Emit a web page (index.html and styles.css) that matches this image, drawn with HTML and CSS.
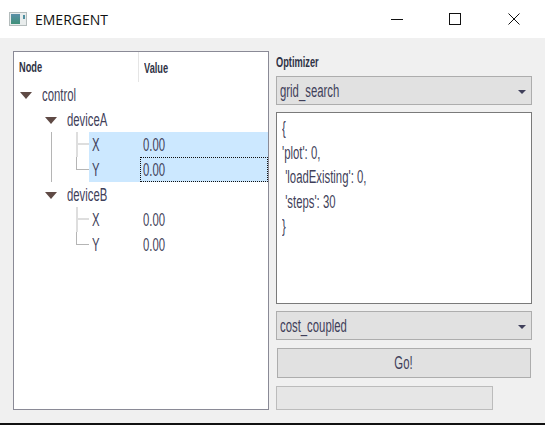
FILE: index.html
```html
<!DOCTYPE html>
<html lang="en">
<head>
    <meta charset="UTF-8" />
    <title>EMERGENT</title>
    <link rel="stylesheet" href="styles.css">
</head>
<body>
    <div class="window">
        <div class="titlebar">
            <svg class="app-icon" width="18" height="14" viewBox="0 0 18 14">
                <defs>
                    <linearGradient id="iconFill" x1="0" y1="0" x2="0" y2="1">
                        <stop offset="0" stop-color="#5a8fa8" />
                        <stop offset="1" stop-color="#3f9078" />
                    </linearGradient>
                </defs>
                <rect x="0.5" y="0.5" width="17" height="13" fill="#e8ecec" stroke="#b4bcbc" />
                <rect x="2" y="2" width="9" height="10" fill="url(#iconFill)" />
                <rect x="14" y="3" width="2" height="4" fill="#4f8fa0" />
            </svg>
            <span class="title">EMERGENT</span>
            <div class="controls">
                <svg width="58" height="12" viewBox="0 0 58 12" class="ctl"><path d="M0 6.5H12" stroke="#111" fill="none" /></svg>
                <svg width="59" height="12" viewBox="0 0 59 12" class="ctl"><rect x="0.5" y="0.5" width="11" height="11" stroke="#111" fill="none" /></svg>
                <svg width="12" height="12" viewBox="0 0 12 12" class="ctl"><path d="M0.5 0.5L11.5 11.5M11.5 0.5L0.5 11.5" stroke="#111" fill="none" /></svg>
            </div>
        </div>

        <div class="main">
            <div class="tree">
                <div class="tree-header">
                    <div class="head-node"><span class="txt bold">Node</span></div>
                    <div class="head-value"><span class="txt bold">Value</span></div>
                </div>

                <div class="row parent">
                    <i class="arrow"></i><span class="txt">control</span>
                </div>
                <div class="row parent depth1">
                    <i class="arrow"></i><span class="txt">deviceA</span>
                </div>
                <div class="row">
                    <div class="gutter"><i class="guide"></i><i class="tee"></i></div>
                    <div class="cells selected">
                        <div class="name"><span class="txt">X</span></div>
                        <div class="value"><span class="txt">0.00</span></div>
                    </div>
                </div>
                <div class="row">
                    <div class="gutter"><i class="guide"></i><i class="elbow"></i></div>
                    <div class="cells selected">
                        <div class="name"><span class="txt">Y</span></div>
                        <div class="value focused"><span class="txt">0.00</span></div>
                    </div>
                </div>
                <div class="row parent depth1">
                    <i class="arrow"></i><span class="txt">deviceB</span>
                </div>
                <div class="row">
                    <div class="gutter"><i class="guide off"></i><i class="tee"></i></div>
                    <div class="cells">
                        <div class="name"><span class="txt">X</span></div>
                        <div class="value"><span class="txt">0.00</span></div>
                    </div>
                </div>
                <div class="row">
                    <div class="gutter"><i class="guide off"></i><i class="elbow"></i></div>
                    <div class="cells">
                        <div class="name"><span class="txt">Y</span></div>
                        <div class="value"><span class="txt">0.00</span></div>
                    </div>
                </div>
            </div>

            <div class="side">
                <div class="label"><span class="txt bold">Optimizer</span></div>
                <div class="combo"><span class="txt">grid_search</span><i class="combo-arrow"></i></div>
                <div class="editor">
                    <div class="line"><span class="txt">{</span></div>
                    <div class="line"><span class="txt">'plot': 0,</span></div>
                    <div class="line"><span class="txt"> 'loadExisting': 0,</span></div>
                    <div class="line"><span class="txt"> 'steps': 30</span></div>
                    <div class="line"><span class="txt">}</span></div>
                </div>
                <div class="combo second"><span class="txt">cost_coupled</span><i class="combo-arrow"></i></div>
                <div class="go"><span class="txt">Go!</span></div>
                <div class="progress"></div>
            </div>
        </div>
    </div>
</body>
</html>
```

FILE: styles.css
```css
body {
    margin: 0;
    background-color: #f0f0f0;
}

.window {
    width: 545px;
    height: 425px;
    display: flex;
    flex-direction: column;
    overflow: hidden;
    border-bottom: 2px solid #111;
    box-sizing: border-box;
    font-family: "Liberation Sans", Arial, sans-serif;
    font-size: 18px;
    color: #3f3f5a;
}

/* condensed look, no narrow font is installed */
.txt {
    display: inline-block;
    white-space: pre;
    transform: scaleX(0.63);
    transform-origin: left center;
}

.bold {
    font-size: 14px;
    font-weight: bold;
    transform: scaleX(0.66);
    color: #2f3345;
}

.titlebar {
    height: 38px;
    flex: none;
    display: flex;
    align-items: center;
    background-color: #ffffff;
    padding-left: 9px;
    box-sizing: border-box;
}

.app-icon {
    margin-right: 8px;
}

.title {
    font-family: "Open Sans", sans-serif;
    font-size: 14px;
    color: #111;
}

.controls {
    margin-left: auto;
    margin-right: 25px;
    display: flex;
}

.ctl {
    display: block;
}

.main {
    flex: 1;
    display: flex;
    gap: 7px;
    padding: 13px 13px 0 13px;
}

.tree {
    width: 256px;
    height: 359px;
    box-sizing: border-box;
    background-color: #ffffff;
    border: 1px solid #8a8a96;
}

.tree-header {
    height: 30px;
    display: flex;
    align-items: center;
}

.head-node {
    width: 125px;
    height: 100%;
    display: flex;
    align-items: center;
    padding-left: 5px;
    box-sizing: border-box;
    border-right: 1px solid #e5e5e5;
}

.head-value {
    padding-left: 5px;
}

.row {
    height: 25px;
    display: flex;
    align-items: center;
}

.parent {
    padding-left: 6px;
    padding-top: 2px;
    box-sizing: border-box;
}

.depth1 {
    padding-left: 31px;
}

.arrow {
    width: 0;
    height: 0;
    margin-right: 10px;
    border-left: 6px solid transparent;
    border-right: 6px solid transparent;
    border-top: 7px solid #5f4a45;
}

.gutter {
    width: 75px;
    height: 100%;
    flex: none;
    display: flex;
}

.guide {
    width: 1px;
    margin-left: 37px;
    background-color: #b5b5b5;
}

.guide.off {
    background-color: transparent;
}

.tee {
    width: 13px;
    margin-left: 24px;
    box-sizing: border-box;
    border-left: 2px solid #dedede;
    background: linear-gradient(#dedede, #dedede) no-repeat 0 11px / 100% 2px;
}

.elbow {
    width: 13px;
    height: 13px;
    margin-left: 24px;
    box-sizing: border-box;
    border-left: 1px solid #b5b5b5;
    border-bottom: 1px solid #b5b5b5;
}

.cells {
    flex: 1;
    height: 100%;
    display: flex;
}

.selected {
    background-color: #cce8ff;
}

.name {
    width: 51px;
    flex: none;
    display: flex;
    align-items: center;
    padding: 2px 0 0 3px;
    box-sizing: border-box;
}

.value {
    flex: 1;
    display: flex;
    align-items: center;
    padding: 2px 0 0 3px;
    box-sizing: border-box;
}

.focused {
    border: 1px dotted #111;
    padding: 1px 0 0 2px;
}

.side {
    width: 256px;
    display: flex;
    flex-direction: column;
}

.label {
    height: 25px;
    line-height: 20px;
}

.combo {
    height: 29px;
    flex: none;
    display: flex;
    align-items: center;
    justify-content: space-between;
    padding: 2px 5px 0 3px;
    box-sizing: border-box;
    background-color: #e1e1e1;
    border: 1px solid #adadad;
}

.second {
    margin-top: 7px;
}

.combo-arrow {
    width: 0;
    height: 0;
    border-left: 4px solid transparent;
    border-right: 4px solid transparent;
    border-top: 4px solid #3f3f5a;
}

.editor {
    height: 192px;
    flex: none;
    margin-top: 7px;
    padding: 3px 5px;
    box-sizing: border-box;
    background-color: #ffffff;
    border: 1px solid #7a7a7a;
}

.line {
    height: 24.5px;
    line-height: 24.5px;
}

.go {
    height: 30px;
    flex: none;
    margin: 8px 1px 0 1px;
    display: flex;
    align-items: center;
    justify-content: center;
    box-sizing: border-box;
    background-color: #e1e1e1;
    border: 1px solid #adadad;
}

.go .txt {
    transform-origin: center;
}

.progress {
    width: 217px;
    height: 24px;
    margin-top: 8px;
    box-sizing: border-box;
    background-color: #e6e6e6;
    border: 1px solid #bcbcbc;
}
```
